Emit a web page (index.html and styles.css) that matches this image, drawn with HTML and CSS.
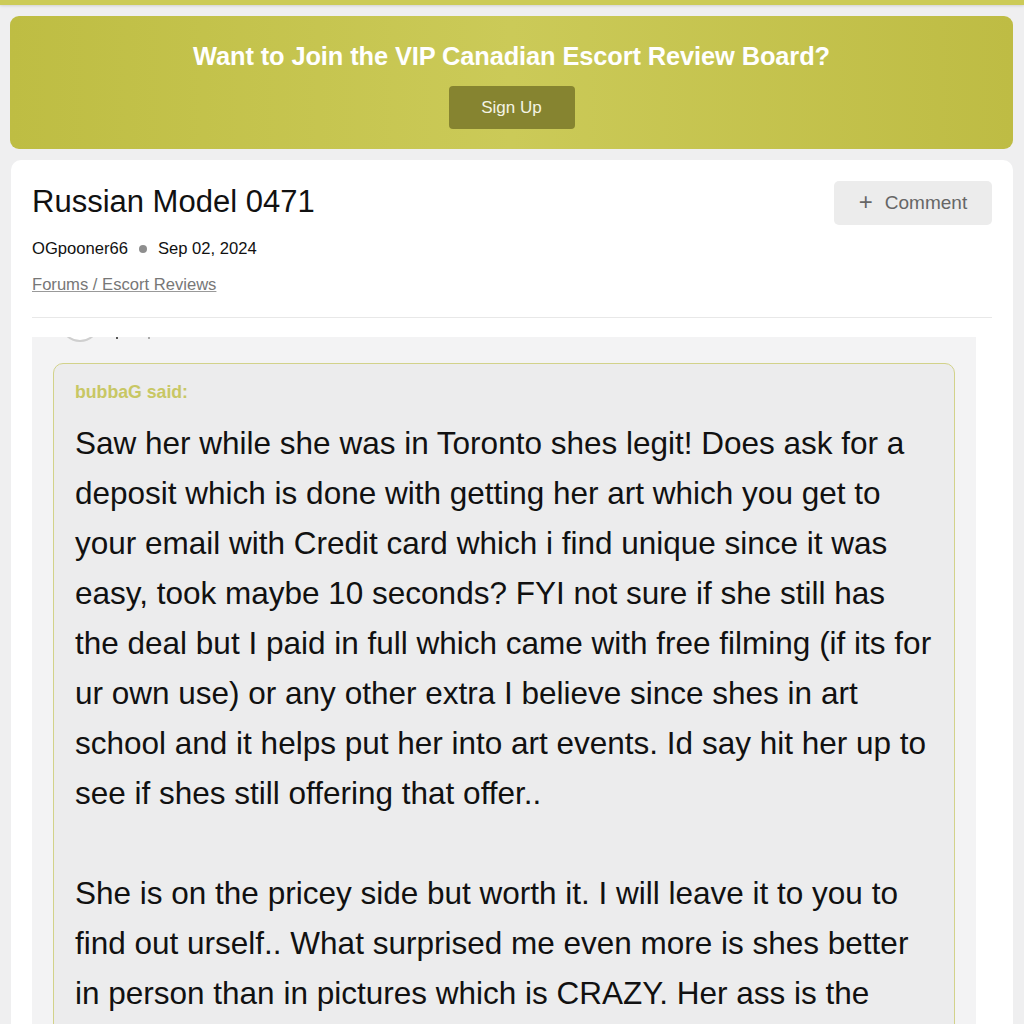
FILE: index.html
```html
<!DOCTYPE html>
<html lang="en">
<head>
<meta charset="utf-8">
<title>Russian Model 0471</title>
<link rel="stylesheet" href="styles.css">
</head>
<body>
<div class="topbar"></div>
<main class="page">
  <section class="vip">
    <h2 class="vip-title">Want to Join the VIP Canadian Escort Review Board?</h2>
    <a class="vip-btn" href="#">Sign Up</a>
  </section>
  <article class="card">
    <header class="thread-head">
      <div class="thread-info">
        <h1 class="thread-title">Russian Model 0471</h1>
        <div class="meta"><span>OGpooner66</span><span class="dot"></span><span>Sep 02, 2024</span></div>
        <a class="crumb" href="#">Forums / Escort Reviews</a>
      </div>
      <button class="comment-btn"><span class="plus">+</span>Comment</button>
    </header>
    <div class="post">
      <div class="post-top">
        <div class="avatar"></div>
        <span class="tick"></span><span class="tick"></span>
      </div>
      <blockquote class="quote">
        <div class="quote-author">bubbaG said:</div>
        <div class="quote-body">Saw her while she was in Toronto shes legit! Does ask for a deposit which is done with getting her art which you get to your email with Credit card which i find unique since it was easy, took maybe 10 seconds? FYI not sure if she still has the deal but I paid in full which came with free filming (if its for ur own use) or any other extra I believe since shes in art school and it helps put her into art events. Id say hit her up to see if shes still offering that offer..<br><br>She is on the pricey side but worth it. I will leave it to you to find out urself.. What surprised me even more is shes better in person than in pictures which is CRAZY. Her ass is the best I have seen in a long time and she knows how to use it.</div>
      </blockquote>
    </div>
  </article>
</main>
</body>
</html>
```

FILE: styles.css
```css
html, body {
  margin: 0;
  padding: 0;
}
body {
  background: #efeff0;
  font-family: "Liberation Sans", Arial, sans-serif;
  color: #111;
  height: 1024px;
  overflow: hidden;
}
.topbar {
  height: 5px;
  background: #cccb58;
  box-shadow: 0 1px 3px rgba(0,0,0,0.12);
}
.page {
  padding: 11px 11px 0 10px;
  display: flex;
  flex-direction: column;
  gap: 11px;
}
.vip {
  height: 133px;
  border-radius: 9px;
  background: linear-gradient(90deg, #bebd43 0%, #cbca58 50%, #bebc44 100%);
  display: flex;
  flex-direction: column;
  align-items: center;
  box-sizing: border-box;
  padding-top: 26px;
}
.vip-title {
  margin: 0;
  color: #fff;
  font-size: 25.4px;
  font-weight: bold;
  line-height: 29px;
  letter-spacing: -0.1px;
}
.vip-btn {
  margin-top: 15px;
  width: 126px;
  height: 43px;
  box-sizing: border-box;
  background: #868430;
  border-radius: 4px;
  color: #f4f4e4;
  text-decoration: none;
  font-size: 17px;
  display: flex;
  align-items: center;
  justify-content: center;
  padding-top: 1px;
}
.card {
  background: #fff;
  border-radius: 10px;
  margin-left: 1px;
  padding: 22px 21px 0 21px;
  min-height: 900px;
}
.thread-head {
  display: flex;
  justify-content: space-between;
  align-items: flex-start;
  border-bottom: 1px solid #e8e8e8;
  padding-bottom: 22px;
}
.thread-title {
  margin: 0;
  font-weight: normal;
  font-size: 31px;
  line-height: 40px;
  color: #111;
}
.meta {
  margin-top: 17px;
  display: flex;
  align-items: center;
  font-size: 16.6px;
  line-height: 20px;
  color: #111;
}
.dot {
  width: 8px;
  height: 8px;
  border-radius: 50%;
  background: #8e8e8e;
  margin: 0 11px 0 11px;
}
.crumb {
  display: inline-block;
  margin-top: 16px;
  font-size: 16.6px;
  line-height: 20px;
  color: #777;
  text-decoration: underline;
  text-decoration-color: #999;
}
.comment-btn {
  margin-top: -1px;
  width: 158px;
  height: 44px;
  border: none;
  border-radius: 5px;
  background: #ececec;
  color: #666;
  font-family: "Liberation Sans", Arial, sans-serif;
  font-size: 19px;
  display: flex;
  align-items: center;
  justify-content: center;
  padding: 0;
}
.plus {
  font-size: 24px;
  font-weight: 300;
  margin-right: 12px;
  line-height: 1;
  position: relative;
  top: -1px;
}
.post {
  margin-top: 19px;
  margin-right: 16px;
  background: #f3f3f4;
  padding: 0 21px 40px 21px;
}
.post-top {
  height: 26px;
  display: flex;
  align-items: flex-start;
  overflow: hidden;
}
.avatar {
  width: 36px;
  height: 36px;
  border-radius: 50%;
  border: 2px solid #cfcfcf;
  margin: -35px 0 0 7px;
  background: #fff;
}
.tick {
  width: 2px;
  height: 2px;
  background: #555;
  margin: 0 0 0 16px;
}
.tick + .tick { margin-left: 30px; background: #aaa; }
.quote {
  margin: 0;
  background: #ececed;
  border: 1.5px solid #d2d28a;
  border-radius: 10px;
  padding: 17px 19px 30px 21px;
}
.quote-author {
  color: #c8c764;
  font-weight: bold;
  font-size: 17.7px;
  line-height: 22px;
}
.quote-body {
  margin-top: 15px;
  font-size: 31.5px;
  line-height: 50px;
  color: #111;
}
```
